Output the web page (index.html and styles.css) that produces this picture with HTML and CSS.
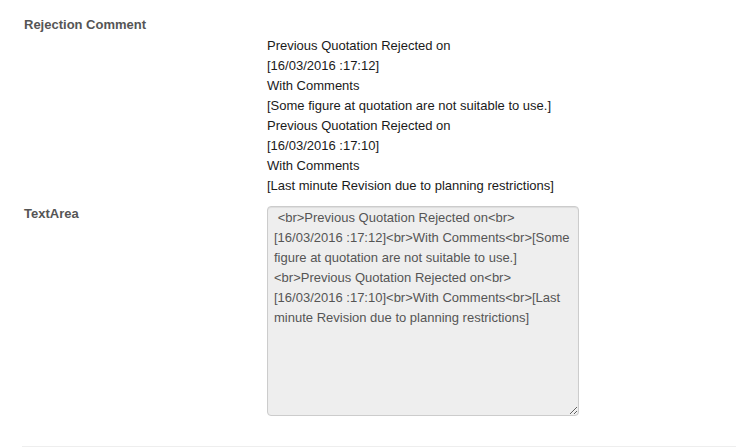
FILE: index.html
```html
<!DOCTYPE html>
<html>
<head>
<meta charset="utf-8">
<link rel="stylesheet" href="styles.css">
</head>
<body>
<div class="form">
  <div class="row">
    <label class="lbl">Rejection Comment</label>
  </div>
  <div class="row">
    <div class="spacer"></div>
    <div class="content">
      Previous Quotation Rejected on<br>
      [16/03/2016 :17:12]<br>
      With Comments<br>
      [Some figure at quotation are not suitable to use.]<br>
      Previous Quotation Rejected on<br>
      [16/03/2016 :17:10]<br>
      With Comments<br>
      [Last minute Revision due to planning restrictions]
    </div>
  </div>
  <div class="row row-ta">
    <label class="lbl lbl-ta">TextArea</label>
    <textarea class="ta" readonly> &lt;br&gt;Previous Quotation Rejected on&lt;br&gt;[16/03/2016 :17:12]&lt;br&gt;With Comments&lt;br&gt;[Some figure at quotation are not suitable to use.]&lt;br&gt;Previous Quotation Rejected on&lt;br&gt;[16/03/2016 :17:10]&lt;br&gt;With Comments&lt;br&gt;[Last minute Revision due to planning restrictions]</textarea>
  </div>
  <hr class="sep">
</div>
</body>
</html>
```
FILE: styles.css
```css
html, body {
  margin: 0;
  padding: 0;
  background: #fff;
}
body {
  font-family: "Liberation Sans", Arial, sans-serif;
  font-size: 13px;
  line-height: 20px;
  color: #1a1a1a;
}
.form {
  padding-top: 15px;
}
.row {
  display: flex;
  align-items: flex-start;
}
.lbl {
  display: block;
  width: 243px;
  padding-left: 24px;
  font-weight: bold;
  color: #555;
  flex: none;
}
.spacer {
  width: 267px;
  flex: none;
}
.content {
  padding-top: 1px;
}
.row-ta {
  margin-top: 8px;
}
.lbl-ta {
  padding-top: 0;
}
.ta {
  box-sizing: border-box;
  width: 312px;
  height: 210px;
  margin: 2px 0 0 0;
  padding: 1px 6px;
  border: 1px solid #ccc;
  border-radius: 4px;
  background: #eee;
  color: #555;
  font-family: "Liberation Sans", Arial, sans-serif;
  font-size: 13px;
  line-height: 20px;
  box-shadow: inset 0 1px 1px rgba(0,0,0,0.075);
  overflow: hidden;
  outline: none;
}
.sep {
  margin: 30px 0 0 22px;
  border: 0;
  border-top: 1px solid #eee;
  height: 0;
}
```
